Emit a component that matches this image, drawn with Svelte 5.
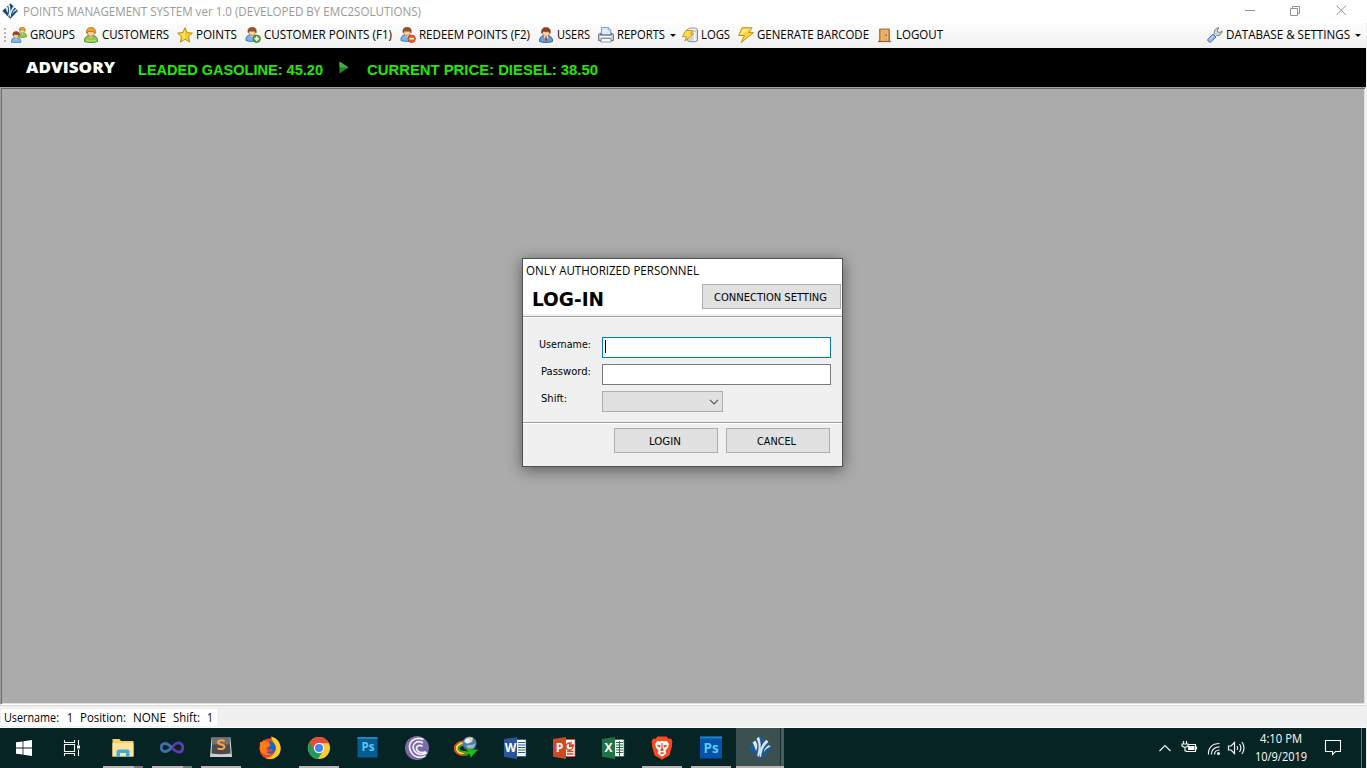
<script>
  const tools = [
    { icon: 'groups', label: 'GROUPS', w: 45 },
    { icon: 'customer', label: 'CUSTOMERS', w: 67 },
    { icon: 'star', label: 'POINTS', w: 41 },
    { icon: 'add', label: 'CUSTOMER POINTS (F1)', w: 128 },
    { icon: 'remove', label: 'REDEEM POINTS (F2)', w: 111 },
    { icon: 'user', label: 'USERS', w: 33 },
    { icon: 'printer', label: 'REPORTS', w: 48, menu: true },
    { icon: 'logs', label: 'LOGS', w: 29 },
    { icon: 'bolt', label: 'GENERATE BARCODE', w: 112 },
    { icon: 'door', label: 'LOGOUT', w: 47 }
  ];
  const settings = { icon: 'wrench', label: 'DATABASE & SETTINGS', w: 124, menu: true };

  const apps = [
    { id: 'taskview' },
    { id: 'folder', open: true, stacked: true },
    { id: 'vs', open: true, stacked: true },
    { id: 'sublime', open: true },
    { id: 'firefox' },
    { id: 'chrome', open: true },
    { id: 'ps' },
    { id: 'torrent' },
    { id: 'idm' },
    { id: 'word' },
    { id: 'powerpoint' },
    { id: 'excel' },
    { id: 'brave', open: true },
    { id: 'ps2', open: true },
    { id: 'pms', open: true, active: true }
  ];

  // Condenses a label so that it fills exactly the given width.
  function fit(node, width) {
    node.style.display = 'inline-block';
    node.style.whiteSpace = 'pre';
    node.style.width = 'max-content';
    const natural = node.getBoundingClientRect().width;
    node.style.width = width + 'px';
    node.style.textAlign = 'left';
    node.style.transformOrigin = '0 50%';
    node.style.transform = `scaleX(${width / natural})`;
  }
</script>

{#snippet person(hair, shirt, edge)}
  <path d="M1.500 14.500c-.3-3.600 1.500-5.500 4-6h4.500c2.800.5 4.900 2.400 4.500 6-3 1.300-10 1.300-13 0z" fill={shirt} stroke={edge} stroke-width=".8" />
  <path d="M5.500 8.500l2.500 3 2.500-3z" fill="#f3c08f" />
  <ellipse cx="8" cy="5.500" rx="3.600" ry="3.800" fill="#fbd3a4" stroke="#a9602a" stroke-width=".6" />
  <path d="M3.800 6.500C2.800 2.300 5 .6 8 .6s5.200 1.700 4.200 5.900l-1.500-1.800c-2 .2-3.800.2-5.400-.3z" fill={hair} stroke="#7d3c16" stroke-width=".5" />
{/snippet}

{#snippet toolIcon(name)}
  <svg class="ico" viewBox="0 0 16 16">
    {#if name === 'groups'}
      <g transform="translate(6 -.3) scale(.66 .7)">{@render person('#eda023', '#8fc94c', '#437d22')}</g>
      <g transform="translate(-.8 4) scale(.74 .78)">{@render person('#8c4a2a', '#76b5f3', '#285fad')}</g>
    {:else if name === 'customer'}
      {@render person('#f3a41f', '#8fca45', '#417c1f')}
      <path d="M3 13.500c1 .5 8 .6 10 0" stroke="#c5e88c" fill="none" />
    {:else if name === 'star'}
      <path d="M8 .7l2.200 4.900 5.200.5-3.900 3.600 1.200 5.400L8 12.400l-4.700 2.700 1.200-5.400L.6 6.100l5.200-.5z" fill="#f7cb27" stroke="#b78611" stroke-width=".9" stroke-linejoin="round" />
      <path d="M8 2.800v8.500l-3 1.900 1-4-3.300-2.500 3.700-.3z" fill="#ffec83" opacity=".7" />
    {:else if name === 'add' || name === 'remove'}
      <g transform="translate(-.5 -.3) scale(.95)">{@render person('#965332', '#73b4f4', '#265da9')}</g>
      <circle cx="11.700" cy="11.800" r="3.700" fill={name === 'add' ? '#5caf36' : '#ed6330'} stroke={name === 'add' ? '#2b7820' : '#bb3518'} stroke-width=".8" />
      <path d={name === 'add' ? 'M9.500 11.800h4.400M11.700 9.600V14' : 'M9.400 11.800h4.600'} stroke="#fff" stroke-width="1.500" />
    {:else if name === 'user'}
      {@render person('#8c4324', '#699fd8', '#264c85')}
      <path d="M6 8.600l2 1.300 2-1.300v2.200L8 14l-1.500-3z" fill="#e8f3ff" /><path d="M7.400 9.800h1.300l.5 3.100L8 14.500l-1-1.600z" fill="#b73126" />
    {:else if name === 'printer'}
      <path d="M3.500 8V.6h7l2.300 2.300V8z" fill="#ddecfb" stroke="#5f83aa" stroke-width=".8" />
      <path d="M10.300.8V3h2.300" fill="#fff" stroke="#5f83aa" stroke-width=".6" />
      <path d="M.6 7.400l1.900-1.300V8h11V6.100l1.900 1.300v6.200H.6z" fill="#c8ccd3" stroke="#5c626d" stroke-width=".9" />
      <path d="M2 9.500h12" stroke="#fff" /><path d="M3.500 11.500h9l.8 3.500H2.700z" fill="#f5faff" stroke="#6a87a9" stroke-width=".8" />
    {:else if name === 'logs'}
      <path d="M5.500 2.500c0-2 10-2 10 0v10.800c0 2-10 2-10 0z" fill="#d7d7d7" stroke="#777" stroke-width=".8" />
      <ellipse cx="10.500" cy="2.700" rx="4.800" ry="1.400" fill="#f7f7f7" stroke="#999" stroke-width=".5" />
      <path d="M12.700 5v9" stroke="#fff" stroke-width="1.500" />
      <path d="M3.800 3.500h6.900L8.500 6.800h3L2.800 14.200l1.700-4.500H.4z" fill="#ffdc4b" stroke="#b88518" stroke-width=".8" />
    {:else if name === 'bolt'}
      <path d="M4 .7h10.200L10.600 5.600h4.900L3.200 15.500l3.300-7H.6z" fill="#ffd638" stroke="#bc8414" stroke-width=".9" stroke-linejoin="round" />
      <path d="M5 2h6.500L4.800 7.200H2.600z" fill="#fff09a" opacity=".8" />
    {:else if name === 'door'}
      <path d="M2.500 14V2h10v12" fill="#cc8e45" stroke="#b17a40" stroke-width="1" />
      <path d="M4.500 3.500h6V14h-6z" fill="#e7ae62" stroke="#f3cb8d" stroke-width=".6" />
      <circle cx="9.200" cy="8.300" r=".8" fill="#8b551b" /><path d="M1 14.500h13" stroke="#8e6238" stroke-width="1.200" />
    {:else if name === 'wrench'}
      <path d="M7.300 6.800c-.5-2 .1-4 2-5.300 1-.7 1.900-.8 2.500-.7L10.400 3l.4 2.100 2.100.4 2.200-1.700c.5 2.300-2 5-5.400 4.700L8.500 9.700 6.400 7.600z" fill="#d4d5d8" stroke="#6e7278" stroke-width=".9" />
      <path d="M6 7l3 3-4.600 4.700c-1.800 1.700-5-1.200-3.200-3z" fill="#92b9ec" stroke="#476fa8" stroke-width=".9" /><path d="M3 12.500l3.500-3.700" stroke="#c9defa" />
    {/if}
  </svg>
{/snippet}

{#snippet tool(t)}
  <div class="tool">
    {@render toolIcon(t.icon)}
    <span class="label" use:fit={t.w}>{t.label}</span>
    {#if t.menu}<i class="caret"></i>{/if}
  </div>
{/snippet}

{#snippet logo(blue, white)}
  <path d="M12.500 .5L24 11.500 12.500 23.500.5 12z" fill={blue} />
  <path d="M4.500 6.500l2.800-2c2.500 3.500 2.500 6.500.7 10.500C6.800 12.500 7 10 4.500 6.500zM8.500 2.500L11 .8c2.500 7 2.200 13-.2 20.200l-1.600-1.800C11 13 11.300 8 8.500 2.500zM18.500 3.800l2 2.200c-4.500 3.500-6.800 8.500-7.300 14.500l-1.400.8c-.3-7.500 1.700-13.300 6.700-17.500zM21 9l1.500 1.800c-3.500 1.400-5 3-6.800 5.700.5-3.500 2-5.500 5.300-7.500z" fill={white} />
{/snippet}

{#snippet office(color, letter)}
  <path d="M12 3.500h11v17H12z" fill="#fff" stroke={color} stroke-width=".7" />
  <path d="M1 3L14 1v22L1 20.800z" fill={color} />
  <text x="7.600" y="16" text-anchor="middle" class="glyph">{letter}</text>
{/snippet}

{#snippet appIcon(id)}
  <svg class="app-icon" viewBox="0 0 24 24">
    {#if id === 'taskview'}
      <path d="M4.500 8.500h10v7h-10zM4.500 4v2.500h10V4M4.500 20v-2.500h10V20M18.500 4v5M18.500 13.500V20" fill="none" stroke="#f5f7f7" stroke-width="1.100" /><path d="M17 9.500h3v3h-3z" fill="#fff" />
    {:else if id === 'folder'}
      <path d="M1.500 3h7l1.500 2h12.500v15.500h-21z" fill="#f4cf65" /><path d="M1.500 7h21v13.500h-21z" fill="#ffe39a" />
      <path d="M5.500 21v-5.500q0-2 2-2h9q2 0 2 2V21H15v-4H9v4z" fill="#35aee5" />
    {:else if id === 'vs'}
      <path d="M12 12C8 7.500 6.500 7.500 5 7.500c-5 0-5 8 0 8 3.500 0 6.200-3.500 8.300-5.700C15.500 7.300 17 6.700 19 7c5 .8 5 8.700 0 9-3 .1-4.700-2-7-4z" fill="none" stroke="#5e3cad" stroke-width="2.800" />
      <path d="M12 12C8 7.500 6.500 7.500 5 7.500c-5 0-5 8 0 8 2.400 0 4.200-1.500 5.800-3" fill="none" stroke="#3576a6" stroke-width="2.400" />
    {:else if id === 'sublime'}
      <path d="M2.500 1.500h19L23 21H1z" fill="#cfcfcf" /><path d="M3.500 1.500h17l1 16q-9.500 1.500-19 0z" fill="#4b4b4b" /><path d="M3.500 1.500h17l.4 7H3.200z" fill="#717171" />
      <path d="M15.500 5c-2.800-1.300-6.500-.8-6.500 1.500 0 2.600 6.500 1.500 6.500 4.300 0 2.500-4 2.800-7 1.500" stroke="#ffa143" stroke-width="2" fill="none" />
    {:else if id === 'firefox'}
      <circle cx="12" cy="12.800" r="10.500" fill="#f6402f" />
      <path d="M13 .5c7.500 2 10.500 8 9.500 14-1 6-8 10.500-15 7.500C12 22 18 18 18 12c0-4-4-6-5-11.500z" fill="#ffcf27" />
      <path d="M2 6c2 .2 3-.4 3.500-2 2 2 6 2 8.500 2.600l-2 3-3.500 1.800c-1 4 3 6.500 7 4.600C14 20 3.500 21 1.700 12.700z" fill="#ff7b16" />
      <path d="M10.500 5c5.500.4 8 4.500 7 8.500-1 5-7.500 5.500-9.500 2 4 1.500 5.500-.3 7-1.600-2-1.300-4 .8-5.500-1.300l3-3.200z" fill="#1866c5" />
    {:else if id === 'chrome'}
      <circle cx="12" cy="12" r="11" fill="#f9cc3a" />
      <path d="M12 12L2.500 6.500A11 11 0 0 0 11 23l5.500-9z" fill="#1c9c5c" />
      <path d="M2.500 6.500A11 11 0 0 1 22 7.300H12L7.500 15z" fill="#e54a3d" />
      <circle cx="12" cy="12" r="5.200" fill="#f6f7fa" /><circle cx="12" cy="12" r="4" fill="#4384f2" />
    {:else if id === 'ps' || id === 'ps2'}
      <path d={id === 'ps' ? 'M1.500 1h20v20.500h-20z' : 'M1 .500h22v22H1z'} fill={id === 'ps' ? '#075b93' : '#0752ac'} />
      <path d={id === 'ps' ? 'M1.500 1h20v2h-20z' : 'M1 .500h22v2H1z'} fill="#1b85bd" />
      <text x="12" y={id === 'ps' ? 15 : 16.500} text-anchor="middle" class="ps" class:large={id === 'ps2'}>Ps</text>
    {:else if id === 'torrent'}
      <circle cx="12" cy="12" r="12" fill="#7a6aa8" />
      <path d="M18.500 3.500C9-.5 2.300 7 5.300 14.500 8 21 14 22.500 20.500 20M18 7C12 3.500 6.500 8 8.600 13.500c1.900 5 8 6 13.400 3.500M17.500 10.500c-3.500-2.500-7 .2-5.700 3.200 1.500 3.300 6 3 9.200 2" stroke="#f3f0fa" stroke-width="1.700" fill="none" />
    {:else if id === 'idm'}
      <path d="M11 5.500C3.500 5.500-1 10 1 14.500c1.700 4 8 5.500 13 4" fill="none" stroke="#ed4632" stroke-width="1.800" />
      <path d="M11 7C5 7 1.500 10.500 3 14c1.500 3 6 4 10.500 3" fill="none" stroke="#ffe72b" stroke-width="2" />
      <path d="M11 9C7 9 4 11 5 13.500c1 2 4 2.500 7.500 2" fill="none" stroke="#2eb23b" stroke-width="1.600" />
      <circle cx="15.500" cy="7.500" r="7" fill="#487eb9" /><path d="M10 6c1-4 6-6 9-4l-1 4-4 1z" fill="#e7d896" /><circle cx="13.500" cy="5" r="2.500" fill="#e8f1f7" /><path d="M12 10c3-2 6 0 9.500-3-1 5-4 7-8 6z" fill="#a8b6c3" />
      <path d="M11 10.500c2 2.200 5.500 3 13 3L16.800 21.500l-1.300-3.500-7 1 5-3.500z" fill="#1fbd19" stroke="#087213" stroke-width=".5" />
    {:else if id === 'word'}
      {@render office('#2a5699', 'W')}<path d="M15 6.500h7M15 9h7M15 11.500h7M15 14h7M15 16.500h7" stroke="#2a5699" stroke-width="1.100" />
    {:else if id === 'powerpoint'}
      {@render office('#d24726', 'P')}<path d="M17.500 7a3.500 3.500 0 1 0 3.500 3.500h-3.500zM19 5.500v3.500h3M15 15.500h6.500M15 18h6.500" stroke="#d24726" stroke-width="1.300" fill="none" />
    {:else if id === 'excel'}
      {@render office('#207346', 'X')}<path d="M15 6.500h7M15 9h7M15 11.500h7M15 14h7M15 16.500h7M18.500 5v15" stroke="#207346" stroke-width="1.100" />
    {:else if id === 'brave'}
      <path d="M7.500.5h9l2 2.300 2.500-.2 1.500 3.200-.7 2.200.2 2-2.500 9.200L12 23.700 4.500 19.200 2 10 2.200 8 1.500 5.800l1.500-3.200 2.500.2z" fill="#ff481d" />
      <path d="M5 8l2.500-3.300 2.500.7 2-.6 2 .6 2.500-.7L19 8l-1 3.500-2.500 3 .8 3-4.300 3.300-4.300-3.300.8-3-2.500-3z" fill="#fff" />
      <path d="M6.800 8.700l3.700.6-.6 2.400-2-1.300zM17.200 8.700l-3.700.6.6 2.400 2-1.300zM11.500 7h1l.2 5.500 1.300 1.500-2 1.200-2-1.200 1.300-1.500zM9.800 17l2.200-1 2.200 1-2.200 1.500z" fill="#fb4020" />
    {:else if id === 'pms'}
      {@render logo('#165a9f', '#dfe2e5')}
    {/if}
  </svg>
{/snippet}

<div class="screen">
  <header class="title">
    <svg class="title-icon" viewBox="0 0 24 24">{@render logo('#17487a', '#e2ecf5')}</svg>
    <span use:fit={398}>POINTS MANAGEMENT SYSTEM ver 1.0 (DEVELOPED BY EMC2SOLUTIONS)</span>
    <svg class="controls" viewBox="0 0 104 12"><path d="M0 6.500h10M45.500 4.500h7v7h-7zM47.500 4.500v-2h7v7h-2M91.500 1.500l9.500 9.500M101 1.500l-9.500 9.500" fill="none" stroke="#929292" /></svg>
  </header>

  <nav class="toolbar">
    <i class="grip"></i>
    {#each tools as t}{@render tool(t)}{/each}
    <div class="right">{@render tool(settings)}</div>
  </nav>

  <section class="advisory">
    <b class="adv" use:fit={89}>ADVISORY</b>
    <div class="ticker">
      <b use:fit={185}>LEADED GASOLINE: 45.20</b>
      <svg class="play" viewBox="0 0 10 13"><path d="M.5.5L9.500 6.500.5 12.500z" fill="#24852a" /><path d="M.5.500L9.500 6.500H.5z" fill="#3fae43" /></svg>
      <b use:fit={231}>CURRENT PRICE: DIESEL: 38.50</b>
    </div>
  </section>

  <main class="workspace">
    <form class="dialog" onsubmit={(e) => e.preventDefault()}>
      <div class="caption"><span use:fit={173}>ONLY AUTHORIZED PERSONNEL</span></div>
      <div class="head">
        <h1 use:fit={72}>LOG-IN</h1>
        <button type="button" class="btn conn"><span use:fit={113}>CONNECTION SETTING</span></button>
      </div>
      <div class="fields">
        <div class="row"><label for="u"><span use:fit={52}>Username:</span></label><div class="input focus" id="u"><i class="cursor"></i></div></div>
        <div class="row"><label for="p" class="in"><span use:fit={50}>Password:</span></label><div class="input" id="p"></div></div>
        <div class="row"><label for="s" class="in"><span use:fit={26}>Shift:</span></label><div class="select" id="s"><svg viewBox="0 0 10 6"><path d="M1 .8l4 4 4-4" fill="none" stroke="#555" stroke-width="1.200" /></svg></div></div>
      </div>
      <div class="foot">
        <button class="btn"><span use:fit={32}>LOGIN</span></button>
        <button type="button" class="btn"><span use:fit={39}>CANCEL</span></button>
      </div>
    </form>
  </main>

  <div class="status">
    <div class="status-text">
      <span use:fit={55}>Username:</span><span class="s1" use:fit={6}>1</span><span class="s2" use:fit={46}>Position:</span><span class="s2" use:fit={33}>NONE</span><span class="s2" use:fit={27}>Shift:</span><span class="s2" use:fit={6}>1</span>
    </div>
  </div>

  <footer class="taskbar">
    <div class="start"><svg viewBox="0 0 16 16"><path d="M0 2.300l6.600-.9v6.200H0zM7.400 1.300L16 0v7.600H7.400zM0 8.400h6.600v6.200L0 13.700zM7.400 8.400H16V16l-8.600-1.300z" fill="#fff" /></svg></div>
    <div class="apps">
      {#each apps as a}
        <div class="app" class:open={a.open} class:stacked={a.stacked} class:active={a.active}>{@render appIcon(a.id)}</div>
      {/each}
    </div>
    <div class="tray">
      <svg class="tray-icons" viewBox="0 0 90 18">
        <g fill="none" stroke="#eef1f1" stroke-width="1.200">
          <path d="M.5 13L6 7.500l5.500 5.500M29 6.500h7.500v7H27M37.500 8.500v3M24.500 3v3M27.500 3v3M23 6h6v2q-3 2.500-6 0zM26 9v4h2" />
          <path d="M49.500 16.500C49 10 53 5.500 60.500 5.500M52.500 16.500c0-4.500 3-7.500 8-7.700M55.500 16.500c0-2.600 1.800-4.300 5-4.500" />
          <path d="M69.500 8H72l3.500-3.500v11L72 12h-2.500zM78 8q1.500 2 0 4M80.500 6q2.800 4 0 8M83 4q4 6 0 12" />
        </g>
        <path d="M29 8h6.500v4H29z" fill="#fff" /><circle cx="59.500" cy="15.500" r="1.500" fill="#fff" />
      </svg>
      <div class="clock"><span use:fit={42}>4:10 PM</span><span use:fit={52}>10/9/2019</span></div>
      <svg class="notes" viewBox="0 0 18 18"><path d="M1.500 2.500h15v11h-5l-3 3v-3h-7z" fill="none" stroke="#fff" stroke-width="1.100" /></svg>
      <i class="peek"></i>
    </div>
  </footer>
</div>

<style>
  :global(body) { background: #f0f0f0; overflow: hidden; }
  .screen { width: 1367px; height: 768px; display: flex; flex-direction: column; box-sizing: border-box; font: 12px/16px "Open Sans", "Noto Sans", sans-serif; color: #000; background: #f0f0f0; overflow: hidden; }
  .title { height: 23px; background: #fff; display: flex; padding: 4px 18px 0 2px; box-sizing: border-box; color: #999; }
  .title-icon { width: 16px; height: 16px; margin: -1px 4px 0 0; }
  .title > span { margin-left: 1px; }
  .controls { width: 104px; height: 12px; margin: 0 0 0 auto; }
  .toolbar { height: 25px; width: 1366px; box-sizing: border-box; display: flex; align-items: center; gap: 8px; padding: 0 5px 1px 4px; background: linear-gradient(#fdfdfd, #f0f0f0); border-radius: 3px; }
  .grip { width: 2px; height: 14px; margin-right: -3px; background: repeating-linear-gradient(#b5b5b5 0 2px, transparent 2px 4px); }
  .tool { display: flex; align-items: center; gap: 3px; }
  .ico { width: 16px; height: 16px; display: block; }
  .caret { border: solid transparent; border-width: 3px 3px 0; border-top-color: #111; margin: 0 -2px 0 2px; }
  .right { margin-left: auto; }
  .right .caret { margin-right: 0; }
  .advisory { height: 39px; width: 1366px; background: #000; display: flex; color: #fff; }
  .adv { font-size: 16px; font-weight: 800; line-height: 20px; margin: 9px 0 0 26px; }
  .ticker { display: flex; margin: 12px 0 0 23px; color: #23e800; font: bold 15.5px/20px "Liberation Sans", Arial, sans-serif; }
  .play { width: 10px; height: 13px; margin: 1px 18px 0 16px; }
  .workspace { height: 618px; width: 1366px; box-sizing: border-box; background: #ababab; border: 1px solid #a0a0a0; border-right-color: #f5f5f5; border-bottom-color: #fff; box-shadow: inset 1px 1px #696969, inset -1px -1px #e0e0e0; padding: 170px 0 0 521px; }
  .dialog { width: 321px; height: 209px; box-sizing: border-box; border: 1px solid #4f5151; background: #f0f0f0; box-shadow: 0 3px 14px rgb(0 0 0 / 48%); font: 11px/14px "DejaVu Sans Condensed", "DejaVu Sans", sans-serif; }
  .caption { height: 24px; padding: 3px 0 0 3px; box-sizing: border-box; background: #fff; font: 12px/17px "Open Sans", sans-serif; }
  .head { height: 35px; box-sizing: border-box; display: flex; justify-content: space-between; padding: 1px 1px 0 9px; background: linear-gradient(#fff 0 31px, #f0f0f0 31px 33px, #a0a0a0 33px 34px, #fff 34px); }
  h1 { margin: 3px 0 0; font: bold 19px/24px "DejaVu Sans", sans-serif; }
  .btn { width: 104px; height: 25px; box-sizing: border-box; padding: 2px 3px 0 0; border: 1px solid #adadad; background: #e1e1e1; font: inherit; color: #000; text-align: center; }
  .conn { width: 139px; }
  .fields { height: 105px; box-sizing: border-box; padding: 19px 0 0 16px; display: flex; flex-direction: column; gap: 6px; border-bottom: 1px solid #a0a0a0; }
  .row { display: flex; height: 21px; }
  label { width: 63px; box-sizing: border-box; padding-top: 1px; }
  .in { padding-left: 2px; }
  .input { width: 229px; box-sizing: border-box; border: 1px solid #7a7a7a; background: #fff; padding: 2px; }
  .focus { border-color: #0078d7; }
  .cursor { display: block; width: 1px; height: 13px; background: #000; }
  .select { width: 121px; box-sizing: border-box; border: 1px solid #adadad; background: #e1e1e1; display: flex; justify-content: flex-end; align-items: center; padding-right: 3px; }
  .select svg { width: 10px; height: 6px; }
  .foot { border-top: 1px solid #fff; display: flex; gap: 8px; justify-content: flex-end; padding: 4px 12px 0 0; }
  .status { height: 23px; width: 1366px; box-sizing: border-box; border-top: 1px solid #d8d8d8; border-bottom: 1px solid #fff; padding: 3px 0 0 1px; background: #f0f0f0; }
  .status-text { width: 216px; height: 17px; box-sizing: border-box; padding-left: 3px; background: #fff; display: flex; line-height: 18px; }
  .s1 { margin-left: 8px; }
  .s2 { margin-left: 7px; }
  .taskbar { height: 40px; width: 1366px; background: #052423; display: flex; color: #fff; }
  .start { width: 48px; display: grid; place-items: center; }
  .start svg { width: 16px; height: 16px; }
  .apps { display: flex; gap: 1px; }
  .app { width: 48px; height: 40px; box-sizing: border-box; display: flex; justify-content: center; padding: 8px 0 0 3px; }
  .app:first-child { padding-left: 0; }
  .app-icon { width: 24px; height: 24px; }
  .glyph { font: bold 12px "Open Sans", sans-serif; fill: #fff; }
  .ps { font: bold 11.5px "Open Sans", sans-serif; fill: #5ec8f2; }
  .large { font-size: 13.5px; }
  .open { background: linear-gradient(#b9b4b3, #b9b4b3) 6px 38px / 40px 2px no-repeat; }
  .stacked { background: linear-gradient(#77787a, #77787a) 37px 38px / 9px 2px no-repeat, linear-gradient(#b9b4b3, #b9b4b3) 6px 38px / 31px 2px no-repeat; }
  .active { margin-left: 2px; padding: 8px 1px 0 0; background: linear-gradient(#b9b4b3, #b9b4b3) 0 38px / 100% 2px no-repeat, linear-gradient(90deg, #3b5151 0 44px, #162f2f 44px 45px, #4b5d5d 45px); }
  .tray { margin-left: auto; display: flex; padding-right: 4px; }
  .tray-icons { width: 90px; height: 18px; margin: 10px 6px 0 0; }
  .clock { width: 52px; display: flex; flex-direction: column; align-items: center; line-height: 18px; padding-top: 2px; margin-right: 17px; }
  .notes { width: 18px; height: 18px; margin: 10px 19px 0 0; }
  .peek { width: 1px; background: #607473; }
</style>
